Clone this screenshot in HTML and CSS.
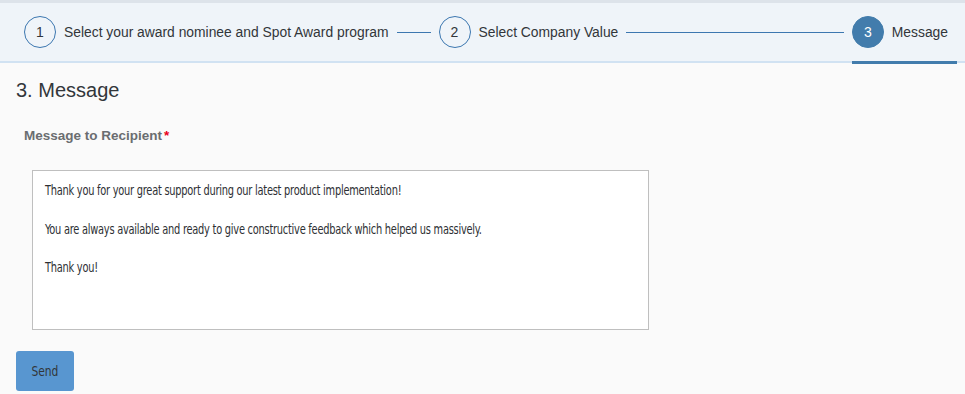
FILE: index.html
```html
<!DOCTYPE html>
<html>
<head>
<meta charset="utf-8">
<link rel="stylesheet" href="styles.css">
</head>
<body>
<div class="topband"></div>
<header class="wizard">
  <div class="step done">
    <span class="circle">1</span>
    <span class="label">Select your award nominee and Spot Award program</span>
  </div>
  <span class="sep short"></span>
  <div class="step done">
    <span class="circle">2</span>
    <span class="label">Select Company Value</span>
  </div>
  <span class="sep long"></span>
  <div class="step active">
    <span class="circle">3</span>
    <span class="label">Message</span>
  </div>
</header>
<main class="content">
  <h2 class="title">3. Message</h2>
  <div class="field-label">Message to Recipient<span class="req">*</span></div>
  <div class="textarea">
    <p>Thank you for your great support during our latest product implementation!</p>
    <p>You are always available and ready to give constructive feedback which helped us massively.</p>
    <p>Thank you!</p>
  </div>
  <button class="send"><span>Send</span></button>
</main>
</body>
</html>
```
FILE: styles.css
```css
* { box-sizing: border-box; }
html, body { margin: 0; padding: 0; }
body {
  background: #fafafa;
  font-family: "Liberation Sans", Arial, sans-serif;
  color: #32363a;
  width: 965px;
  height: 394px;
  overflow: hidden;
}
.topband { height: 3px; background: #dde3ea; }
.wizard {
  height: 60px;
  background: #eff4f9;
  border-bottom: 2px solid #d1e2f2;
  display: flex;
  align-items: center;
  padding: 0 17px 0 24px;
  position: relative;
}
.step { display: flex; align-items: center; height: 100%; position: relative; }
.circle {
  width: 32px; height: 32px;
  border-radius: 50%;
  border: 1px solid #3c77b0;
  display: flex; align-items: center; justify-content: center;
  font-size: 14px;
  color: #32363a;
  flex: none;
}
.label { font-size: 13.85px; margin-left: 8px; color: #32363a; white-space: nowrap; }
.step.active .circle { background: #427cac; border-color: #427cac; color: #fff; }
.step.active::after {
  content: "";
  position: absolute;
  left: 0; right: -9px;
  bottom: -3px;
  height: 3px;
  background: #427cac;
}
.sep { height: 1px; background: #3c77b0; margin: 0 8px; }
.sep.short { width: 34px; }
.sep.long { flex: 1; }
.content { padding: 15px 16px 0 16px; }
.title {
  margin: 0;
  font-weight: normal;
  font-size: 20px;
  line-height: 24px;
  color: #32363a;
}
.field-label {
  margin: 26px 0 0 8px;
  font-size: 13.5px;
  font-weight: bold;
  color: #6a6d70;
}
.req { color: #e9001b; margin-left: 2px; }
.textarea {
  margin: 27px 0 0 16px;
  width: 617px;
  height: 160px;
  background: #fff;
  border: 1px solid #bfbfbf;
  padding: 10px 12px;
  font-family: "DejaVu Sans Condensed", "DejaVu Sans", sans-serif;
  font-stretch: condensed;
  font-size: 13.5px;
  letter-spacing: -0.3px;
  line-height: 19px;
  color: #2d3034;
}
.textarea p {
  margin: 0 0 19.5px 0;
  white-space: nowrap;
  transform: scaleX(0.81);
  transform-origin: left center;
}
.send {
  margin-top: 21px;
  width: 58px;
  height: 40px;
  background: #5896d0;
  border: none;
  border-radius: 3px;
  color: #32363a;
  font-family: "DejaVu Sans Condensed", "DejaVu Sans", sans-serif;
  font-stretch: condensed;
  font-size: 14px;
  display: block;
  padding: 0;
}
.send span { display: inline-block; transform: scaleX(0.85); }
```
